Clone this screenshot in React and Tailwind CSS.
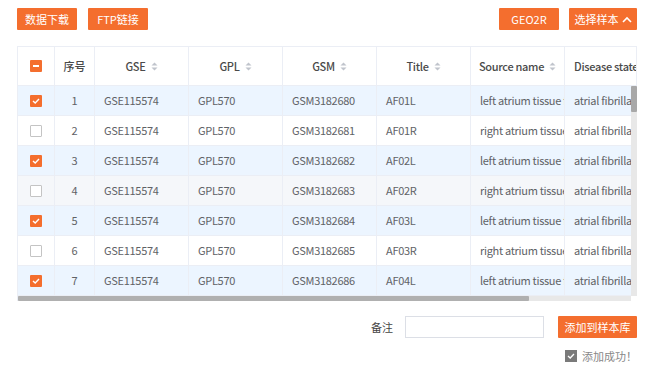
import React from "react";

const rows = [
  { n: 1, c: true, gsm: "GSM3182680", t: "AF01L", s: "left atrium tissue from patient" },
  { n: 2, c: false, gsm: "GSM3182681", t: "AF01R", s: "right atrium tissue from patient" },
  { n: 3, c: true, gsm: "GSM3182682", t: "AF02L", s: "left atrium tissue from patient" },
  { n: 4, c: false, gsm: "GSM3182683", t: "AF02R", s: "right atrium tissue from patient", hover: true },
  { n: 5, c: true, gsm: "GSM3182684", t: "AF03L", s: "left atrium tissue from patient" },
  { n: 6, c: false, gsm: "GSM3182685", t: "AF03R", s: "right atrium tissue from patient" },
  { n: 7, c: true, gsm: "GSM3182686", t: "AF04L", s: "left atrium tissue from patient" },
];

function Sort() {
  return (
    <svg width="7" height="9" viewBox="0 0 7 9" className="ml-[5px] shrink-0">
      <path d="M3.5 0.5 L6.5 3.5 L0.5 3.5 Z" fill="#c0c4cc" />
      <path d="M3.5 8.5 L6.5 5.5 L0.5 5.5 Z" fill="#c0c4cc" />
    </svg>
  );
}

function Check({ on }) {
  if (on)
    return (
      <span className="w-[12px] h-[12px] bg-[#f46e2e] rounded-[1px] flex items-center justify-center">
        <svg width="8" height="6" viewBox="0 0 8 6">
          <path d="M1 3 L3.2 5 L7 1" stroke="#fff" strokeWidth="1.4" fill="none" />
        </svg>
      </span>
    );
  return <span className="w-[12px] h-[12px] bg-white border border-[#c4c4c4] rounded-[1px] box-border" />;
}

function Btn({ children, className = "" }) {
  return (
    <div
      className={
        "h-[22px] bg-[#f46e2e] text-white text-[11px] flex items-center justify-center rounded-[1px] " +
        className
      }
    >
      {children}
    </div>
  );
}

const cellB = "border-r border-[#ebeef5] shrink-0 overflow-hidden whitespace-nowrap";

export default function App() {
  return (
    <div className="w-[647px] h-[366px] bg-white font-['Noto_Sans_CJK_SC','Noto_Sans',sans-serif] text-[11px] text-[#606266] relative overflow-hidden">
      <div className="flex items-center justify-between pl-[17px] pr-[10px] pt-[8px]">
        <div className="flex gap-[11px]">
          <Btn className="w-[60px]">数据下载</Btn>
          <Btn className="w-[60px]">FTP链接</Btn>
        </div>
        <div className="flex gap-[10px]">
          <Btn className="w-[60px]">GEO2R</Btn>
          <Btn className="w-[68px] gap-[3px]">
            选择样本
            <svg width="10" height="7" viewBox="0 0 10 7">
              <path d="M1 6 L5 2 L9 6" stroke="#fff" strokeWidth="1.6" fill="none" />
            </svg>
          </Btn>
        </div>
      </div>

      <div className="ml-[17px] mt-[16px] w-[620px] border-t border-l border-[#ebeef5] relative tracking-[-0.3px]">
        {/* header */}
        <div className="flex h-[39px] border-b border-[#ebeef5] text-[#4a4a4a] font-medium">
          <div className={cellB + " w-[37px] flex items-center justify-center"}>
            <span className="w-[12px] h-[12px] bg-[#f46e2e] rounded-[1px] flex items-center justify-center">
              <span className="w-[6px] h-[1.5px] bg-white" />
            </span>
          </div>
          <div className={cellB + " w-[40px] flex items-center justify-center tracking-normal"}>序号</div>
          {["GSE", "GPL", "GSM", "Title", "Source name"].map((h) => (
            <div key={h} className={cellB + " w-[94px] flex items-center justify-center"}>
              {h}
              <Sort />
            </div>
          ))}
          <div className="w-[73px] flex items-center pl-[9px] overflow-hidden whitespace-nowrap border-r border-[#ebeef5]">
            Disease state
            <Sort />
          </div>
        </div>
        {/* body */}
        <div className="flex">
          <div className="w-[614px] overflow-hidden">
            {rows.map((r) => (
              <div
                key={r.n}
                className={
                  "flex h-[30px] border-b border-[#ebeef5] items-stretch " +
                  (r.c ? "bg-[#ecf5ff]" : r.hover ? "bg-[#f5f7fa]" : "bg-white")
                }
              >
                <div className={cellB + " w-[37px] flex items-center justify-center"}>
                  <Check on={r.c} />
                </div>
                <div className={cellB + " w-[40px] flex items-center justify-center"}>{r.n}</div>
                <div className={cellB + " w-[94px] flex items-center pl-[9px]"}>GSE115574</div>
                <div className={cellB + " w-[94px] flex items-center pl-[9px]"}>GPL570</div>
                <div className={cellB + " w-[94px] flex items-center pl-[9px]"}>{r.gsm}</div>
                <div className={cellB + " w-[94px] flex items-center pl-[9px]"}>{r.t}</div>
                <div className={cellB + " w-[94px] flex items-center pl-[9px]"}>{r.s}</div>
                <div className="w-[67px] shrink-0 overflow-hidden whitespace-nowrap flex items-center pl-[9px]">
                  atrial fibrillation
                </div>
              </div>
            ))}
          </div>
          <div className="w-[6px] bg-[#e8e8e8] relative">
            <div className="h-[26px] w-[6px] bg-[#a8a8a8] rounded-[1px]" />
          </div>
        </div>
        <div className="flex h-[5px]">
          <div className="w-[614px] bg-[#e8e8e8]">
            <div className="w-[511px] h-[5px] bg-[#b0b0b0] rounded-[1px]" />
          </div>
          <div className="w-[6px] bg-white" />
        </div>
      </div>

      <div className="flex items-center justify-end pr-[10px] mt-[15px] gap-[12px]">
        <span className="text-[#444]">备注</span>
        <div className="w-[139px] h-[22px] border border-[#dcdfe6] bg-white" />
        <Btn className="w-[79px] ml-[2px]">添加到样本库</Btn>
      </div>
      <div className="flex items-center justify-end pr-[10px] mt-[10px] gap-[5px] text-[#888]">
        <span className="w-[12px] h-[12px] bg-[#7a7a7a] flex items-center justify-center">
          <svg width="8" height="6" viewBox="0 0 8 6">
            <path d="M1 3 L3.2 5 L7 1" stroke="#fff" strokeWidth="1.3" fill="none" />
          </svg>
        </span>
        <span>添加成功！</span>
      </div>
    </div>
  );
}
